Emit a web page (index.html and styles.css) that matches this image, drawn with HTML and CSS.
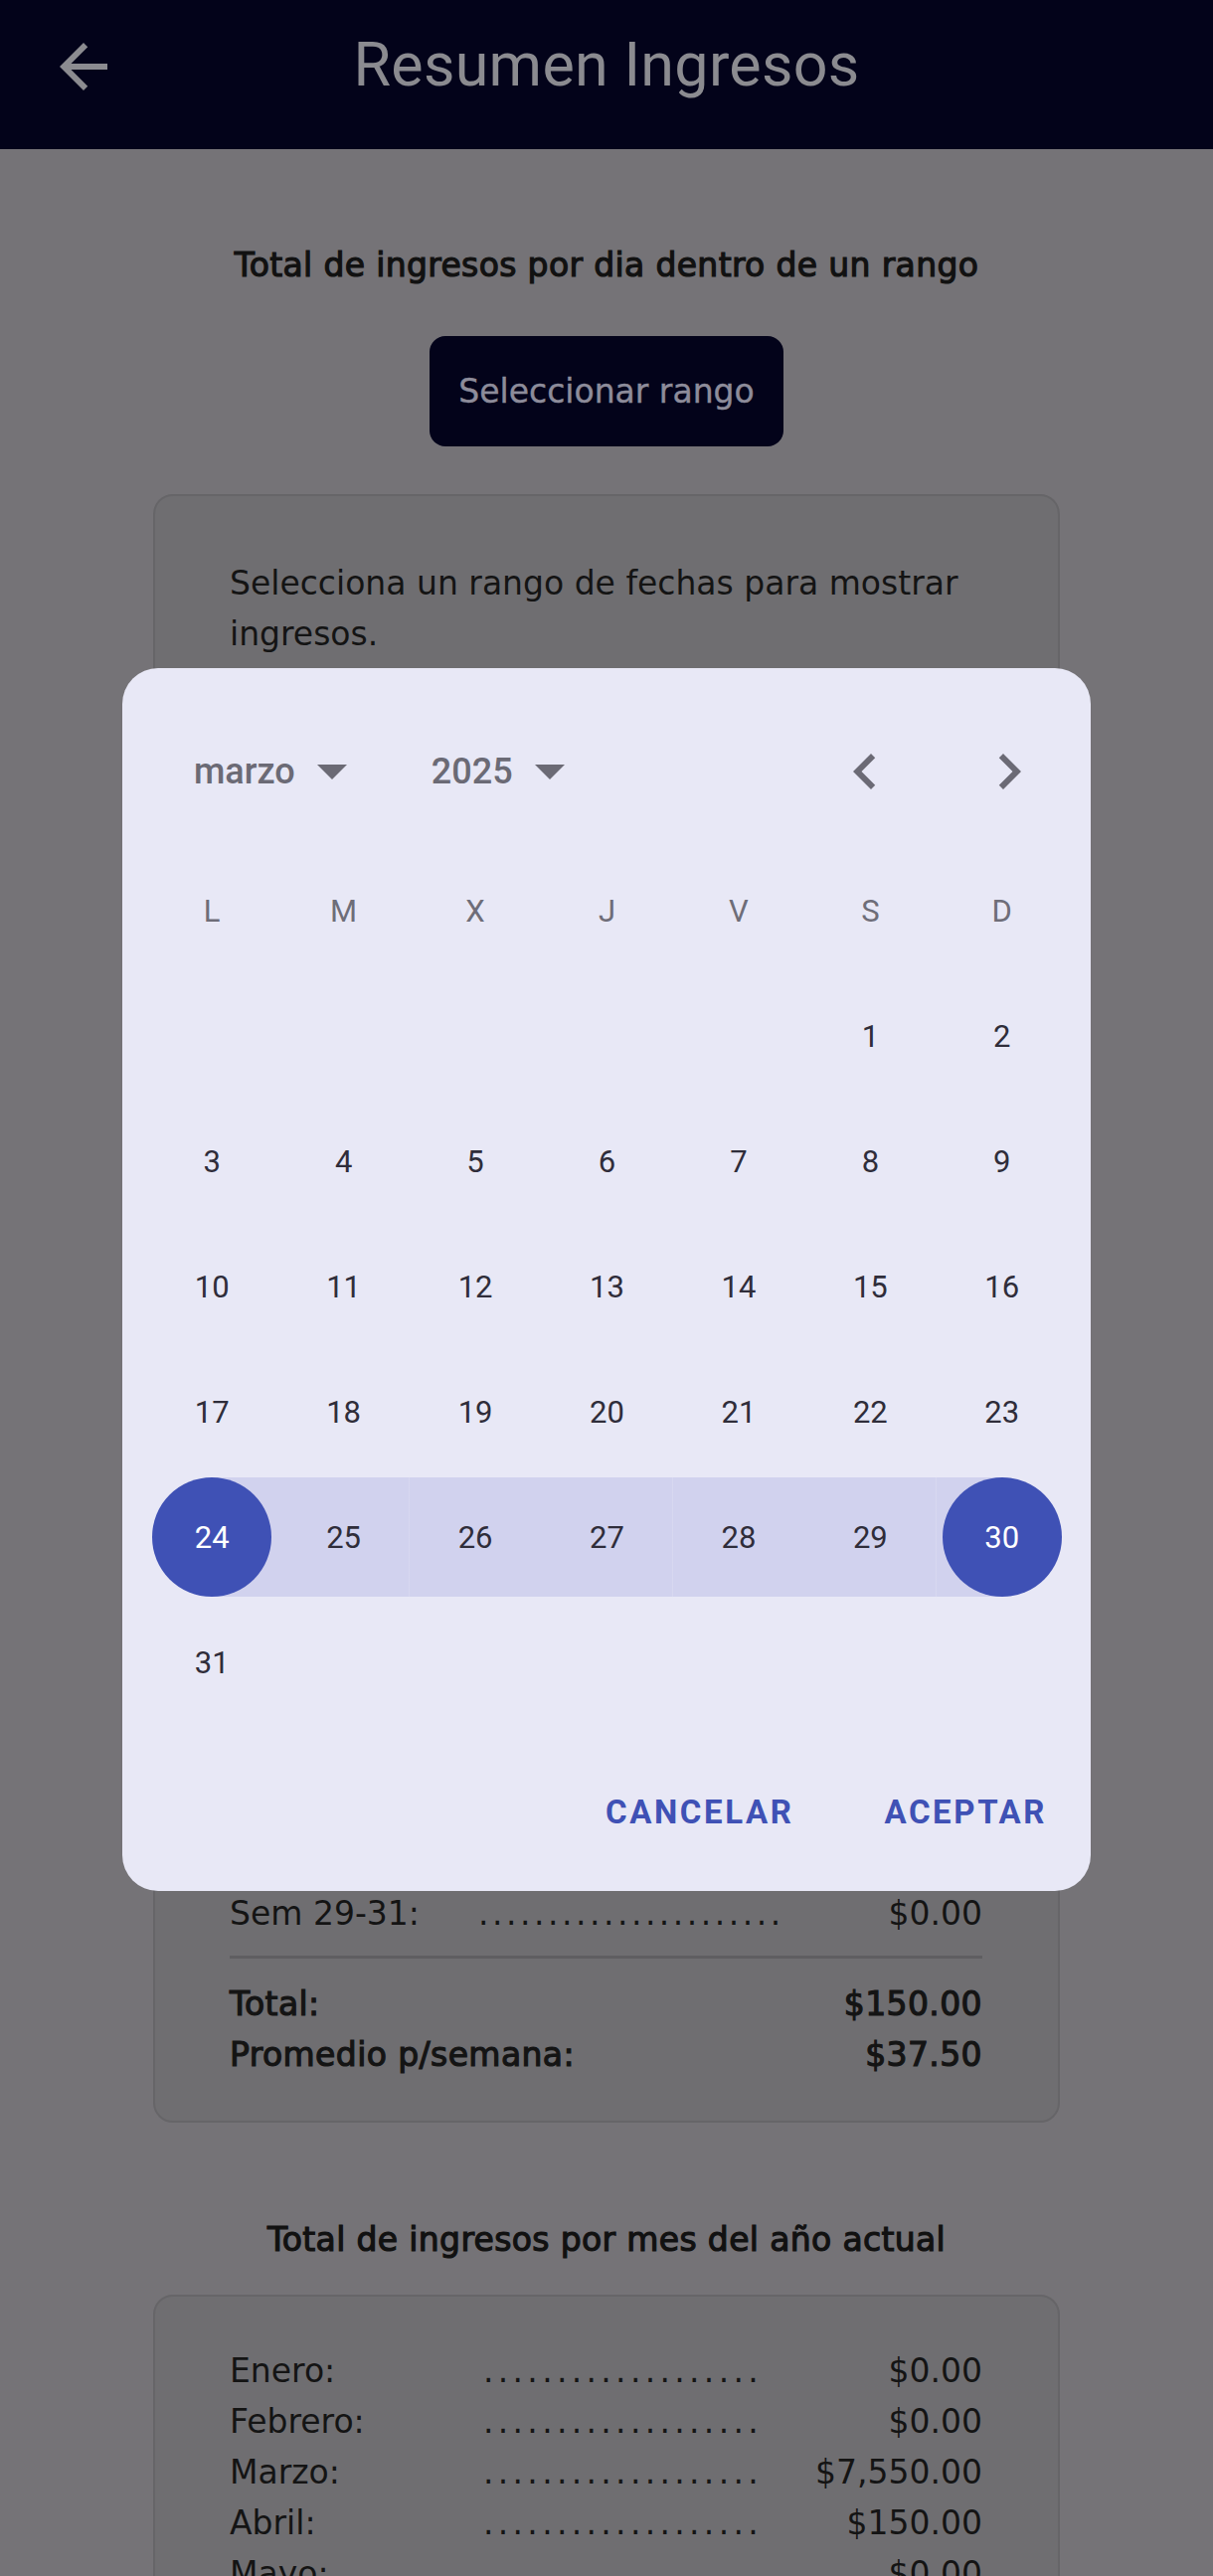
FILE: index.html
```html
<!DOCTYPE html>
<html lang="es">
<head>
<meta charset="utf-8">
<title>Resumen Ingresos</title>
<link rel="stylesheet" href="styles.css">
</head>
<body>
<header class="appbar">
  <div class="leading">
    <svg class="back-icon" viewBox="0 0 24 24" width="72" height="72"><path d="M20 11H7.83l5.59-5.59L12 4l-8 8 8 8 1.41-1.41L7.83 13H20v-2z" fill="currentColor"/></svg>
  </div>
  <h1 class="appbar-title">Resumen Ingresos</h1>
  <div class="trailing"></div>
</header>

<main class="content">
  <h2 class="section-title first">Total de ingresos por dia dentro de un rango</h2>
  <button class="range-btn">Seleccionar rango</button>

  <section class="card card-weeks">
    <p class="hint">Selecciona un rango de fechas para mostrar ingresos.</p>
    <div class="chart-area"></div>
    <div class="row"><span class="label">Sem 1-7:</span><span class="dots">......................</span><span class="value">$0.00</span></div>
    <div class="row"><span class="label">Sem 8-14:</span><span class="dots">......................</span><span class="value">$150.00</span></div>
    <div class="row"><span class="label">Sem 15-21:</span><span class="dots">......................</span><span class="value">$0.00</span></div>
    <div class="row"><span class="label">Sem 22-28:</span><span class="dots">......................</span><span class="value">$0.00</span></div>
    <div class="row"><span class="label">Sem 29-31:</span><span class="dots">......................</span><span class="value">$0.00</span></div>
    <div class="divider"></div>
    <div class="row bold"><span class="label">Total:</span><span class="value">$150.00</span></div>
    <div class="row bold"><span class="label">Promedio p/semana:</span><span class="value">$37.50</span></div>
  </section>

  <h2 class="section-title second">Total de ingresos por mes del año actual</h2>

  <section class="card card-months">
    <div class="row"><span class="label m">Enero:</span><span class="dots m">...................</span><span class="value">$0.00</span></div>
    <div class="row"><span class="label m">Febrero:</span><span class="dots m">...................</span><span class="value">$0.00</span></div>
    <div class="row"><span class="label m">Marzo:</span><span class="dots m">...................</span><span class="value">$7,550.00</span></div>
    <div class="row"><span class="label m">Abril:</span><span class="dots m">...................</span><span class="value">$150.00</span></div>
    <div class="row"><span class="label m">Mayo:</span><span class="dots m">...................</span><span class="value">$0.00</span></div>
    <div class="row"><span class="label m">Junio:</span><span class="dots m">...................</span><span class="value">$0.00</span></div>
    <div class="row"><span class="label m">Julio:</span><span class="dots m">...................</span><span class="value">$0.00</span></div>
    <div class="row"><span class="label m">Agosto:</span><span class="dots m">...................</span><span class="value">$0.00</span></div>
  </section>
</main>

<div class="dialog" role="dialog">
  <div class="dlg-header">
    <span class="dd-text">marzo</span>
    <svg class="dd-arrow" viewBox="0 0 30 15" width="30" height="15"><path d="M0 0H30L15 15Z" fill="currentColor"/></svg>
    <span class="dd-text year">2025</span>
    <svg class="dd-arrow" viewBox="0 0 30 15" width="30" height="15"><path d="M0 0H30L15 15Z" fill="currentColor"/></svg>
    <span class="spacer"></span>
    <span class="nav"><svg viewBox="0 0 24 24" width="72" height="72"><path d="M15.41 7.41L14 6l-6 6 6 6 1.41-1.41L10.83 12z" fill="currentColor"/></svg></span>
    <span class="nav"><svg viewBox="0 0 24 24" width="72" height="72"><path d="M10 6L8.59 7.41 13.17 12l-4.58 4.59L10 18l6-6z" fill="currentColor"/></svg></span>
  </div>
  <div class="cal">
    <div class="wd">L</div><div class="wd">M</div><div class="wd">X</div><div class="wd">J</div><div class="wd">V</div><div class="wd">S</div><div class="wd">D</div>
    <div class="day"></div><div class="day"></div><div class="day"></div><div class="day"></div><div class="day"></div><div class="day"><span>1</span></div><div class="day"><span>2</span></div>
    <div class="day"><span>3</span></div><div class="day"><span>4</span></div><div class="day"><span>5</span></div><div class="day"><span>6</span></div><div class="day"><span>7</span></div><div class="day"><span>8</span></div><div class="day"><span>9</span></div>
    <div class="day"><span>10</span></div><div class="day"><span>11</span></div><div class="day"><span>12</span></div><div class="day"><span>13</span></div><div class="day"><span>14</span></div><div class="day"><span>15</span></div><div class="day"><span>16</span></div>
    <div class="day"><span>17</span></div><div class="day"><span>18</span></div><div class="day"><span>19</span></div><div class="day"><span>20</span></div><div class="day"><span>21</span></div><div class="day"><span>22</span></div><div class="day"><span>23</span></div>
    <div class="day sel start"><span>24</span></div><div class="day mid"><span>25</span></div><div class="day mid"><span>26</span></div><div class="day mid"><span>27</span></div><div class="day mid"><span>28</span></div><div class="day mid"><span>29</span></div><div class="day sel end"><span>30</span></div>
    <div class="day"><span>31</span></div><div class="day"></div><div class="day"></div><div class="day"></div><div class="day"></div><div class="day"></div><div class="day"></div>
  </div>
  <div class="actions">
    <button class="txt-btn">CANCELAR</button>
    <button class="txt-btn">ACEPTAR</button>
  </div>
</div>
</body>
</html>
```
FILE: styles.css
```css
* { box-sizing: border-box; }
html, body { margin: 0; padding: 0; }
body {
  background: #757377;
  font-family: "DejaVu Sans", sans-serif;
  color: #141414;
  width: 1220px;
  overflow: hidden;
}

.appbar {
  height: 150px;
  background: #03031a;
  display: grid;
  grid-template-columns: 168px 1fr 168px;
  align-items: start;
}
.leading { padding: 31px 0 0 48px; color: #8b8b90; }
.back-icon { display: block; }
.appbar-title {
  margin: 31px 0 0 0;
  font-family: Roboto, sans-serif;
  font-size: 61px;
  line-height: 68px;
  font-weight: 400;
  color: #8b8b90;
  text-align: center;
  letter-spacing: 0.3px;
}

.content {
  display: flex;
  flex-direction: column;
  align-items: center;
}
.section-title {
  margin: 0;
  font-family: "DejaVu Sans", sans-serif;
  font-size: 33px;
  line-height: 40px;
  font-weight: 400;
  letter-spacing: 0.35px;
  -webkit-text-stroke: 1.2px #111;
  color: #111;
}
.section-title.first { margin-top: 97px; }
.section-title.second { margin-top: 98px; }

.range-btn {
  margin-top: 51px;
  width: 356px;
  height: 111px;
  border: none;
  border-radius: 16px;
  background: #03031a;
  color: #8d8c9a;
  font-family: "DejaVu Sans", sans-serif;
  font-size: 33px;
  font-weight: 400;
  -webkit-text-stroke: 0.4px #8d8c9a;
  padding: 0;
}

.card {
  width: 912px;
  border: 2px solid #666568;
  border-radius: 20px;
  background: #6f6e71;
  padding: 0 76px 0 75px;
}
.card-weeks { margin-top: 48px; padding-top: 62px; padding-bottom: 41px; }
.card-months { margin-top: 35px; padding-top: 49px; padding-bottom: 41px; }

.hint { margin: 0; font-size: 33px; line-height: 51px; color: #141414; }
.chart-area { height: 1000px; margin: 16px 0; }

.row {
  display: flex;
  font-size: 33px;
  line-height: 51px;
  color: #141414;
  white-space: nowrap;
}
.row .label { width: 250px; flex: none; }
.row .label.m { width: 255px; }
.row .dots { letter-spacing: 3.5px; flex: none; }
.row .dots.m { letter-spacing: 4.3px; }
.row .value { flex: 1; text-align: right; }
.row.bold { -webkit-text-stroke: 1.2px #141414; letter-spacing: 0.4px; }
.row.bold .label { width: auto; }

.divider { height: 3px; background: #5f5e61; margin: 17px 0 20px; }

.dialog {
  position: absolute;
  top: 672px;
  left: 123px;
  width: 974px;
  height: 1230px;
  background: #e8e8f6;
  border-radius: 36px;
  padding-top: 56px;
  font-family: Roboto, sans-serif;
}
.dlg-header {
  height: 96px;
  display: flex;
  align-items: center;
  padding: 0 10px 0 72px;
  color: #6b6a75;
}
.dd-text { font-size: 36px; line-height: 36px; font-weight: 500; }
.dd-arrow { margin-left: 22px; display: block; }
.dd-text.year { margin-left: 85px; }
.spacer { flex: 1; }
.nav { width: 145px; height: 96px; display: flex; align-items: center; justify-content: center; }
.nav svg { display: block; }

.cal {
  margin-top: 29px;
  padding: 0 23px 0 24px;
  display: grid;
  grid-template-columns: repeat(7, 1fr);
  grid-auto-rows: 126px;
}
.wd, .day {
  display: flex;
  align-items: center;
  justify-content: center;
  font-size: 31px;
  line-height: 31px;
}
.wd { color: #6e6d78; }
.day { color: #2f2d3a; }
.day span { display: flex; align-items: center; justify-content: center; width: 120px; height: 120px; border-radius: 50%; }
.day.mid, .day.start, .day.end {
  background-image: linear-gradient(#d1d2ee, #d1d2ee);
  background-repeat: no-repeat;
}
.day.mid { background-size: 100% 120px; background-position: center center; }
.day.start { background-size: 50% 120px; background-position: right center; }
.day.end { background-size: 50% 120px; background-position: left center; }
.day.sel span { background: #3f51b5; color: #ffffff; }

.actions {
  margin-top: 57px;
  height: 60px;
  display: flex;
  justify-content: flex-end;
  align-items: center;
  gap: 91px;
  padding-right: 44px;
}
.txt-btn {
  border: none;
  background: none;
  padding: 0;
  font-family: Roboto, sans-serif;
  font-size: 33px;
  line-height: 33px;
  font-weight: 700;
  letter-spacing: 2.6px;
  color: #3f51b5;
}
```
